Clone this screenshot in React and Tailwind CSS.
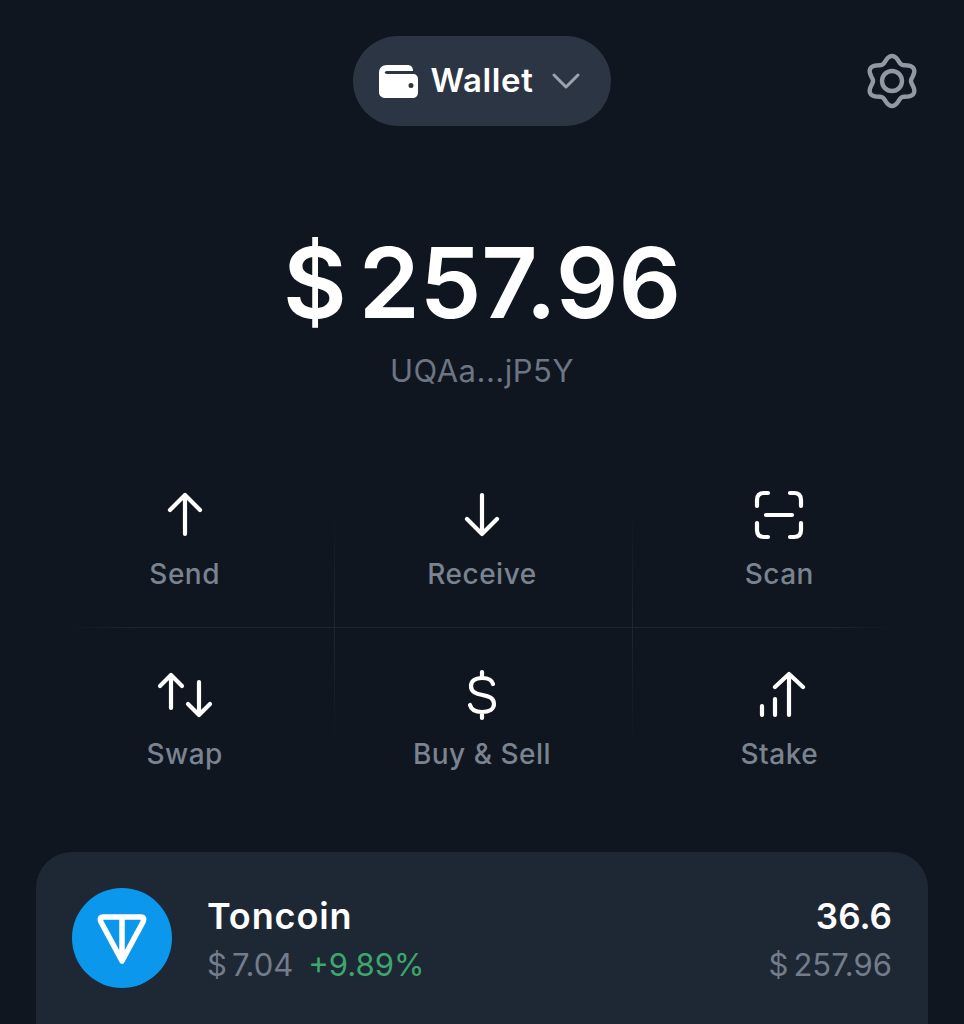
const iconProps = {
  width: 56,
  height: 56,
  viewBox: "0 0 56 56",
  fill: "none",
  stroke: "white",
  strokeWidth: 4.2,
  strokeLinecap: "round",
  strokeLinejoin: "round",
};

const ArrowUp = () => (
  <svg {...iconProps}>
    <path d="M28 8V47M13 23 28 8 43 23" />
  </svg>
);

const ArrowDown = () => (
  <svg {...iconProps}>
    <path d="M28 8V47M13 32 28 47 43 32" />
  </svg>
);

const ScanIcon = () => (
  <svg {...iconProps}>
    <path d="M6 19V13Q6 6 13 6H17M39 6H43Q50 6 50 13V19M6 36V43Q6 50 13 50H17M39 50H43Q50 50 50 43V36M15 28H41" />
  </svg>
);

const SwapIcon = () => (
  <svg {...iconProps}>
    <path d="M14 8V41M3 19 14 8 25 19M42 15V48M31 37 42 48 53 37" />
  </svg>
);

const DollarIcon = () => (
  <svg {...iconProps}>
    <path d="M28 5V11M28 45V51M39 17C38 13 34 11 28 11C21 11 17 14 17 19C17 32 40 24 40 37C40 42 35 45 28 45C21 45 17 42 16 38" />
  </svg>
);

const StakeIcon = () => (
  <svg {...iconProps}>
    <path d="M38 7V48M24 20 38 7 52 20M24 32V48M11 39V48" />
  </svg>
);

const WalletIcon = () => (
  <svg width="39" height="33" viewBox="0 0 39 33">
    <path
      fill="white"
      fillRule="evenodd"
      d="M8 0H28C32 0 34 2 34 6H8C5 6 5 9 8 9H34C37 9 39 11 39 14V27C39 31 37 33 33 33H7C3 33 0 31 0 27V8C0 3 3 0 8 0ZM32 18A2.5 2.5 0 1 0 32 23A2.5 2.5 0 1 0 32 18Z"
    />
  </svg>
);

// six rounded lobes, one pointing straight up
const gearPath = () => {
  const pts = [];
  for (let i = 0; i < 144; i++) {
    const t = (i / 144) * Math.PI * 2;
    const r = 22 + 3 * Math.cos(6 * t);
    pts.push(`${(28 + r * Math.sin(t)).toFixed(2)} ${(28 - r * Math.cos(t)).toFixed(2)}`);
  }
  return `M${pts.join("L")}Z`;
};

const GearIcon = () => (
  <svg width="56" height="56" viewBox="0 0 56 56" fill="none" stroke="#9199a4" strokeWidth="4.4" strokeLinejoin="round">
    <path d={gearPath()} />
    <circle cx="28" cy="28" r="10" />
  </svg>
);

const TonLogo = () => (
  <div className="flex h-[100px] w-[100px] shrink-0 items-center justify-center rounded-full bg-[#0b98ec]">
    <svg width="50" height="50" viewBox="0 0 50 50" fill="none" stroke="white" strokeWidth="5.5" strokeLinejoin="round" className="mt-[2px]">
      <path d="M6 3H44Q48 3 46 8L25 47 4 8Q2 3 6 3ZM25 3V47" />
    </svg>
  </div>
);

const actions = [
  { label: "Send", icon: <ArrowUp /> },
  { label: "Receive", icon: <ArrowDown /> },
  { label: "Scan", icon: <ScanIcon /> },
  { label: "Swap", icon: <SwapIcon /> },
  { label: "Buy & Sell", icon: <DollarIcon /> },
  { label: "Stake", icon: <StakeIcon /> },
];

const App = () => {
  return (
    <div
      className="flex h-[1024px] w-[964px] flex-col overflow-hidden bg-[#10161f] text-white"
      style={{ fontFamily: '"Inter", "Noto Sans", sans-serif' }}
    >
      <header className="relative mt-9 flex justify-center">
        <button className="flex h-[90px] w-[258px] items-center justify-center gap-[13px] rounded-full bg-[#2c3543] pr-[4px]">
          <WalletIcon />
          <span className="text-[33px] font-semibold tracking-[0.6px]">Wallet</span>
          <svg width="30" height="18" viewBox="0 0 30 18" fill="none" stroke="#9ca3af" strokeWidth="3" strokeLinecap="round" strokeLinejoin="round" className="ml-[5px]">
            <path d="M3 3 15 15 27 3" />
          </svg>
        </button>
        <div className="absolute top-[17px] right-[44px]">
          <GearIcon />
        </div>
      </header>

      <div className="mt-[97px] flex flex-col items-center">
        <p className="text-[98px] leading-[120px] font-semibold">
          <span className="mr-[12px]">$</span>257.96
        </p>
        <p className="mt-[8px] text-[31px] leading-10 tracking-[0.5px] text-[#6c7583]">UQAa...jP5Y</p>
      </div>

      <div className="relative mx-9 mt-[56px] grid grid-cols-3 grid-rows-[180px_180px]">
        <div className="absolute top-[60px] left-[298px] h-[240px] w-px bg-gradient-to-b from-transparent via-[#1e2631] to-transparent" />
        <div className="absolute top-[60px] left-[596px] h-[240px] w-px bg-gradient-to-b from-transparent via-[#1e2631] to-transparent" />
        <div className="absolute top-[180px] left-[34px] h-px w-[824px] bg-[linear-gradient(90deg,transparent,#1e2631_8%,#1e2631_92%,transparent)]" />
        {actions.map((item) => (
          <div key={item.label} className="flex flex-col items-center pt-[40px]">
            {item.icon}
            <span className="mt-[13px] text-[28px] leading-9 font-medium tracking-[0.5px] text-[#7a8390]">{item.label}</span>
          </div>
        ))}
      </div>

      <div className="mx-9 mt-[45px] flex flex-1 items-start rounded-t-[36px] bg-[#1e2835] px-9 pt-9">
        <TonLogo />
        <div className="mt-2 ml-9 flex-1">
          <p className="-ml-px text-[36px] leading-[40px] font-semibold tracking-[0.9px]">Toncoin</p>
          <p className="mt-[7px] -ml-px text-[31px] leading-[44px] text-[#737c8a]">
            <span className="mr-[5px]">$</span>7.04<span className="ml-[15px] text-[#3da66f]">+9.89%</span>
          </p>
        </div>
        <div className="mt-2 text-right">
          <p className="text-[35px] leading-[40px] font-semibold">36.6</p>
          <p className="mt-[7px] text-[31px] leading-[44px] text-[#737c8a]">
            <span className="mr-[5px]">$</span>257.96
          </p>
        </div>
      </div>
    </div>
  );
};

export default App;
